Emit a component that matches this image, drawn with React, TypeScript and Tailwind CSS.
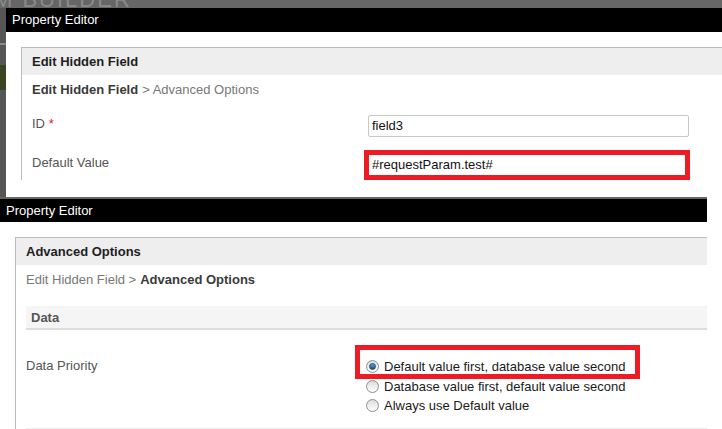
import React from "react";

const font = { fontFamily: '"Liberation Sans", Arial, sans-serif' };

const Radio = ({ checked, label }: { checked?: boolean; label: string }) => (
  <label className="flex h-[19.5px] items-center gap-[5px] text-[13px] text-[#1a1a1a]">
    <span className="flex h-[13px] w-[13px] items-center justify-center rounded-full border border-[#8e8f8f] bg-gradient-to-b from-[#dcdcdc] to-[#ffffff]">
      {checked && (
        <span className="h-[7px] w-[7px] rounded-full border border-[#1a4f7a] bg-gradient-to-b from-[#5fa3d8] to-[#16508a]" />
      )}
    </span>
    {label}
  </label>
);

const TitleBar = ({ pad }: { pad: string }) => (
  <div className={`flex items-center bg-black text-[13px] text-white ${pad}`}>Property Editor</div>
);

const EditHiddenWindow = () => (
  <div className="absolute left-[6px] top-[8px] h-[421px] w-[716px] overflow-hidden bg-white">
    <TitleBar pad="h-[24px] pl-[6px]" />
    <div className="pl-[15px] pt-[15px]">
      <div className="w-[720px] border-l border-t border-[#bbbbbb]">
        <div className="flex h-[27px] items-center bg-[#eeeeee] pl-[10px] text-[13px] font-bold text-[#1e1e1e]">
          Edit Hidden Field
        </div>
        <div className="flex h-[28px] items-center pl-[10px] pt-[1px] text-[13px] text-[#777777]">
          <span className="font-bold text-[#3a3a3a]">Edit Hidden Field</span>
          <span className="ml-[4px]">&gt; Advanced Options</span>
        </div>
        <div className="pl-[10px] text-[13px] text-[#555555]">
          <div className="mt-[12px] flex items-start">
            <div className="mt-[1px] w-[336px] leading-[16px]">
              ID <span className="text-[#ee1133]">*</span>
            </div>
            <div className="flex h-[22px] w-[321px] items-center rounded-[2px] border border-[#c8c8c8] pl-[3px] text-[#111111]">
              field3
            </div>
          </div>
          <div className="mt-[13px] flex items-start">
            <div className="mt-[5px] w-[332px] leading-[16px]">Default Value</div>
            <div className="flex h-[30px] w-[326px] items-center border-[5px] border-[#ed1c24] pl-[3px] text-[#111111]">
              #requestParam.test#
            </div>
          </div>
        </div>
      </div>
    </div>
  </div>
);

const AdvancedWindow = () => (
  <div className="absolute left-0 top-[197px] h-[232px] w-[707px] overflow-hidden border-t-2 border-[#666666] bg-white">
    <TitleBar pad="h-[23px] pl-[6px]" />
    <div className="pl-[15px] pt-[15px]">
      <div className="w-[700px] border-l border-t border-[#bbbbbb]">
        <div className="flex h-[27px] items-center bg-[#eeeeee] pl-[10px] text-[13px] font-bold text-[#1e1e1e]">
          Advanced Options
        </div>
        <div className="flex h-[28px] items-center pl-[10px] pt-[1px] text-[13px] text-[#777777]">
          <span>Edit Hidden Field &gt;</span>
          <span className="ml-[4px] font-bold text-[#3a3a3a]">Advanced Options</span>
        </div>
        <div className="ml-[10px] mt-[13px] flex h-[24px] items-center border-b-2 border-[#dddddd] bg-[#f5f5f5] pl-[5px] pt-[2px] text-[13px] font-bold text-[#555555]">
          Data
        </div>
        <div className="ml-[10px] flex border-b border-[#eeeeee] pb-[12px] pt-[27px] text-[13px]">
          <div className="w-[340px] leading-[17px] text-[#555555]">Data Priority</div>
          <div className="relative flex flex-col">
            <Radio checked label="Default value first, database value second" />
            <Radio label="Database value first, default value second" />
            <Radio label="Always use Default value" />
            <div className="absolute left-[-11px] top-[-12px] h-[34px] w-[285px] border-[5px] border-[#ed1c24]" />
          </div>
        </div>
      </div>
    </div>
  </div>
);

export default function App() {
  return (
    <div className="relative h-[429px] w-[722px] overflow-hidden bg-[#5e5e5e]" style={font}>
      <div className="absolute left-0 top-0 h-[8px] w-full overflow-hidden bg-[#666666]">
        <div className="-ml-[6px] -mt-[9px] text-[22px] leading-[18px] tracking-[2px] text-[#8a8a8a]">M BUILDER</div>
      </div>
      <div className="absolute left-0 top-[8px] flex h-[190px] w-[6px] flex-col bg-[#565656]">
        <div className="mt-[35px] h-[2px] bg-[#8a8a8a]" />
        <div className="mt-[20px] h-[25px] bg-[#3b4522]" />
      </div>
      <EditHiddenWindow />
      <AdvancedWindow />
    </div>
  );
}
